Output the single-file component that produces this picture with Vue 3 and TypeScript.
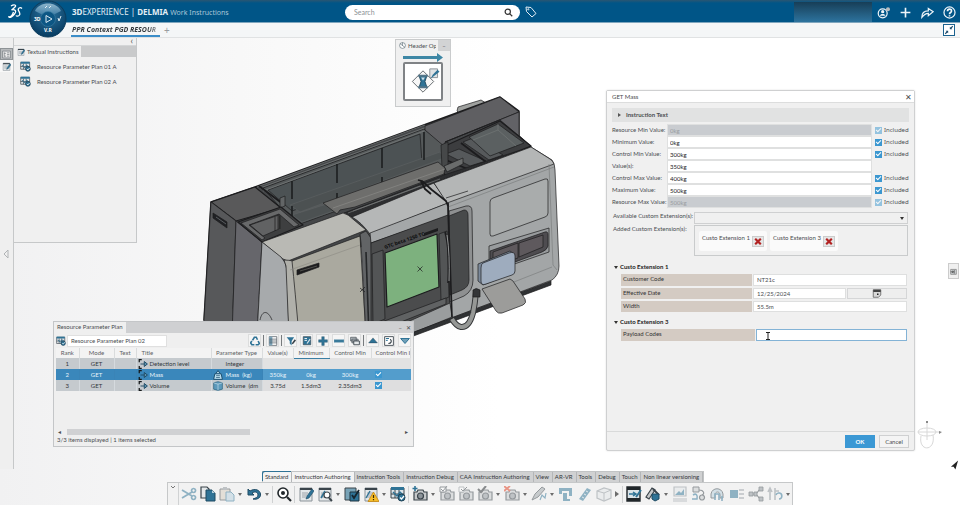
<script setup lang="ts">
import { ref } from 'vue'

interface Shape {
  d: string
  f?: string
  s?: string
  w?: number
}
interface Tool {
  name: string
  icon: Shape[]
  dim?: boolean
  menu?: boolean
  sep?: boolean
}

const B = '#2f7396'
const D = '#3a444b'
const G = '#8b9399'

const sheet: Shape[] = [
  { d: 'M2 2H14V15H2Z', f: '#e4e8ea', s: G },
  { d: 'M2 2H14V4H2Z', f: D },
  { d: 'M4 7H10M4 9H9M4 11H8', s: G, w: 0.8 },
]
const pencil: Shape[] = [{ d: 'M8 13L9 10L14 3L16 5L11 12Z', f: B, s: '#1f4a63', w: 0.6 }]
const camera: Shape[] = [
  { d: 'M2 6H5L6 4H11L12 6H15V14H2Z', f: '#c6c9cb', s: D, w: 1.2 },
  { d: 'M8.500 7A3 3 0 1 0 8.500 13A3 3 0 1 0 8.500 7Z', f: '#8b9399', s: D, w: 1.2 },
]
const planIcon: Shape[] = [
  { d: 'M1 2H14V12H1Z', f: '#dde5ea', s: D },
  { d: 'M1 1H14V4H1Z', f: B },
  { d: 'M5 4V12M9 4V12M1 8H14', s: D },
  { d: 'M3 6L7 10L10 6L13 9', s: B, w: 1.4 },
  { d: 'M11.500 8A3.500 3.500 0 1 0 11.500 15A3.500 3.500 0 1 0 11.500 8Z', f: B, s: '#1c3d50' },
  { d: 'M10 11.500L11.500 13L14 10', s: '#ffffff', w: 1.2 },
]
const undo: Shape[] = [
  { d: 'M2 3V9H8L6 7C9 5 12 6 12 9C12 11 10 12 7 13C12 14 15 11 14.500 8C14 4 9 2 4 5Z', f: B, s: '#1f4a63', w: 1 },
]

const tools: Tool[] = [
  { name: 'Cut', dim: true, icon: [
    { d: 'M1 4L11 10M1 12L11 6', s: B, w: 1.8 },
    { d: 'M12.500 2.500A2 2 0 1 0 12.600 2.500ZM12.500 9.500A2 2 0 1 0 12.600 9.500Z', s: B, w: 1.7 },
  ] },
  { name: 'Copy', icon: [
    { d: 'M1 1H7L9 3V12H1Z', f: '#e4e8ea', s: D, w: 1.2 },
    { d: 'M6 4H12L15 7V15H6Z', f: B, s: '#1f4a63', w: 1 },
    { d: 'M12 4V7H15', f: '#b6d0dd' },
  ] },
  { name: 'Paste', dim: true, menu: true, icon: [
    { d: 'M1 3H11V14H1Z', f: '#d5cdbd', s: D },
    { d: 'M4 1H8V4H4Z', f: G },
    { d: 'M7 6H12L15 9V15H7Z', f: '#b6d0dd', s: B },
  ] },
  { name: 'Undo', menu: true, icon: undo },
  { name: 'Search', sep: true, icon: [
    { d: 'M7 2A5 5 0 1 0 7 12A5 5 0 1 0 7 2Z', f: '#ffffff', s: '#20262a', w: 1.6 },
    { d: 'M7 5A2 2 0 1 0 7 9A2 2 0 1 0 7 5Z', f: '#20262a' },
    { d: 'M11 11L15 15', s: '#20262a', w: 2.2 },
  ] },
  { name: 'Edit instruction', sep: true, icon: [...sheet, ...pencil] },
  { name: 'Inspect instruction', menu: true, icon: [
    ...sheet,
    { d: 'M4 12L8 5', s: B, w: 1.6 },
    { d: 'M10 6A3 3 0 1 0 10 12A3 3 0 1 0 10 6Z', f: '#ffffff', s: D, w: 1.2 },
    { d: 'M12 12L15 15', s: D, w: 1.8 },
  ] },
  { name: 'Validate', icon: [
    { d: 'M1 2H12V14H1Z', f: '#78a3b7', s: D },
    { d: 'M6 6H15V15H6Z', f: B, s: '#1f3440' },
    { d: 'M8 9L10 12L15 4', s: '#17262f', w: 1.8 },
  ] },
  { name: 'Warnings', menu: true, icon: [
    ...sheet,
    { d: 'M3 12L7 5', s: B, w: 1.4 },
    { d: 'M10.500 6L16 15.500H5Z', f: '#f6bd29', s: '#c5860e', w: 0.8 },
    { d: 'M10.500 9V12M10.500 13V14.200', s: '#3a2a00', w: 1.2 },
  ] },
  { name: 'Parameter plan', icon: planIcon },
  { name: 'Capture', sep: true, menu: true, icon: [...camera, { d: 'M3 0V5M0.500 2.500H5.500', s: B, w: 1.6 }] },
  { name: 'Capture list', dim: true, icon: [...camera, { d: 'M1 1H7V6H1Z', f: '#ffffff', s: D }, { d: 'M2 3L4 5L8 0', s: D }] },
  { name: 'Capture check', dim: true, icon: [...camera, { d: 'M1 1H6V6H1Z', f: '#ffffff', s: G }, { d: 'M3 3L5 5L9 1', s: D }] },
  { name: 'Apply capture', dim: true, menu: true, icon: [...camera, { d: 'M1 3L4 6L9 0', s: '#20262a', w: 2 }] },
  { name: 'Delete capture', dim: true, menu: true, icon: [...camera, { d: 'M0 0L6 5M6 0L0 5', s: '#e03818', w: 1.8 }] },
  { name: 'Annotate', dim: true, menu: true, icon: [
    { d: 'M1 14L4 8L11 1L14 3L7 11Z', f: '#9ea5a9', s: D },
    { d: 'M9 14L11 9L14 12L15 7', s: B, w: 1.2 },
  ] },
  { name: 'Measure', dim: true, icon: [
    { d: 'M1 2H14V10H11V5H4V8H1Z', f: B },
    { d: 'M5 7H9V13H12V15H5Z', f: B },
  ] },
  { name: 'Ruler', dim: true, icon: [{ d: 'M2 13L10 2L14 4L6 15Z', f: B }, { d: 'M5 11L7 12M7 8L9 9M9 5L11 6', s: '#ffffff', w: 0.8 }] },
  { name: 'Box', dim: true, menu: true, icon: [
    { d: 'M1 5L8 2L15 4V12L8 15L1 12Z', f: '#e4e8ea', s: G, w: 1.2 },
    { d: 'M1 5L8 7L15 4M8 7V15', s: G },
  ] },
  { name: 'Filmstrip', sep: true, icon: [
    { d: 'M1 1H14V15H1Z', f: '#dbe4e9', s: '#20262a', w: 1.4 },
    { d: 'M1 1H14V4H1ZM1 12H14V15H1Z', f: '#20262a' },
    { d: 'M3 8H9M7 6L10 8L7 10', s: B, w: 1.5 },
    { d: 'M10 11L15 4', s: B, w: 2 },
  ] },
  { name: 'Assemble', menu: true, icon: [
    { d: 'M1 11L7 2L10 4L4 13Z', f: '#c6c9cb', s: D, w: 1.2 },
    { d: 'M8 3L14 9', s: D, w: 2 },
    { d: 'M7 8H14V13L10 15L7 13Z', f: B, s: '#1f4a63' },
  ] },
  { name: 'Picture list', dim: true, icon: [
    { d: 'M2 1H14V10H2Z', f: '#e4e8ea', s: G, w: 1.2 },
    { d: 'M3 9L7 5L9 7L12 3V9Z', f: B },
    { d: 'M1 13H15M1 15H15', s: G, w: 1.2 },
  ] },
  { name: 'Link objects', dim: true, icon: [
    { d: 'M2 1H8V6H2Z', f: '#c6c9cb', s: D },
    { d: 'M8 4C13 4 14 8 11 9', s: D, w: 1.2 },
    { d: 'M11 9A2.500 2.500 0 1 0 11 14A2.500 2.500 0 1 0 11 9Z', f: '#c6c9cb', s: D, w: 1.2 },
    { d: 'M2 9C5 7 7 9 6 13H1', s: B, w: 1.6 },
  ] },
  { name: 'Arc', dim: true, icon: [
    { d: 'M1 12V8C2 1 12 1 13 8V12H10V9C10 5 5 5 5 9V12Z', f: '#b6d0dd', s: D, w: 1 },
    { d: 'M5 14V8H9V14M12 10V15', s: B, w: 1.6 },
  ] },
  { name: 'Align', dim: true, icon: [
    { d: 'M1 4H9V12H1Z', f: B },
    { d: 'M10 4H15M10 8H15M10 12H15', s: G, w: 1.6 },
  ] },
  { name: 'Tree', dim: true, icon: [
    { d: 'M3 8H8M8 8L12 3M8 8L12 13', s: D, w: 1.2 },
    { d: 'M1 6H5V10H1ZM11 1H15V5H11ZM11 11H15V15H11ZM6 6H9V10H6Z', f: G, s: D, w: 0.8 },
  ] },
  { name: 'Flow', dim: true, menu: true, icon: [
    { d: 'M3 14V3M1 6L3 2L5 6M8 2V14M8 5H12', s: G, w: 1.6 },
    { d: 'M9 9A3 3 0 1 1 12 13', s: B, w: 1.6 },
  ] },
]

const gridTools: Tool[] = [
  { name: 'Refresh', icon: [
    { d: 'M4 7L7 2H10L12 6', s: B, w: 2.6 },
    { d: 'M13 8L15 12L13 14H9', s: B, w: 2.6 },
    { d: 'M7 14H3L1 11L3 8', s: B, w: 2.6 },
  ] },
  { name: 'List view', sep: true, icon: [
    { d: 'M2 1H14V15H2Z', f: '#ffffff', s: D },
    { d: 'M2 1H7V15H2Z', f: '#7da6bb' },
    { d: 'M2 5H14M2 8H14M2 11H14', s: D },
  ] },
  { name: 'Filter', sep: true, icon: [
    { d: 'M1 2H13L9 8V15L6 12V8Z', f: B },
    { d: 'M9 12L14 5L16 7L11 13Z', f: D },
  ] },
  { name: 'Edit list', icon: [
    { d: 'M2 1H14V14H2Z', f: B, s: D },
    { d: 'M4 4H8M4 7H8', s: '#ffffff', w: 1.4 },
    { d: 'M8 12L13 5', s: '#d7e3e9', w: 2 },
  ] },
  { name: 'Add', icon: [{ d: 'M6 1H10V6H15V10H10V15H6V10H1V6H6Z', f: B, s: '#1f4a63', w: 0.6 }] },
  { name: 'Remove', icon: [{ d: 'M0 6H16V10H0Z', f: B, s: '#78a3b7' }] },
  { name: 'Duplicate', icon: [
    { d: 'M1 2H10V8H1ZM3 5H13V11H3Z', f: '#b6bcc0', s: D },
    { d: 'M6 8H15V14H6Z', f: '#e4e8ea', s: D, w: 1.4 },
  ] },
  { name: 'Move up', sep: true, icon: [{ d: 'M8 3L15 11H1Z', f: B, s: '#1f3440', w: 0.6 }] },
  { name: 'Reorder', icon: [
    { d: 'M1 1H15V15H1Z', f: '#ffffff', s: D, w: 1.4 },
    { d: 'M3 4H8M3 7H6', s: B, w: 1.6 },
    { d: 'M7 12C12 12 13 8 10 5', s: D, w: 1.8 },
  ] },
  { name: 'Move down', icon: [{ d: 'M1 4H15L8 12Z', f: '#6f9fb7', s: B, w: 1.6 }] },
]

const ribbon = ['Standard', 'Instruction Authoring', 'Instruction Tools', 'Instruction Debug', 'CAA Instruction Authoring', 'View', 'AR-VR', 'Tools', 'Debug', 'Touch', 'Non linear versioning']

const plans = ['Resource Parameter Plan 01 A', 'Resource Parameter Plan 02 A']

const columns = ['Rank', 'Mode', 'Text', 'Title', 'Parameter Type', 'Value(s)', 'Minimum', 'Control Min', 'Control Min In']
const rows = [
  { rank: 1, mode: 'GET', title: 'Detection level', type: 'Integer', unit: '', value: '', min: '', control: '', inc: false },
  { rank: 2, mode: 'GET', title: 'Mass', type: 'Mass', unit: '(kg)', value: '350kg', min: '0kg', control: '300kg', inc: true },
  { rank: 3, mode: 'GET', title: 'Volume', type: 'Volume', unit: '(dm', value: '3.75d', min: '1.5dm3', control: '2.35dm3', inc: true },
]

const fields = ref([
  { id: 'rmin', label: 'Resource Min Value:', value: '0kg', locked: true, check: true, on: true },
  { id: 'min', label: 'Minimum Value:', value: '0kg', locked: false, check: true, on: true },
  { id: 'cmin', label: 'Control Min Value:', value: '300kg', locked: false, check: true, on: true },
  { id: 'val', label: 'Value(s):', value: '350kg', locked: false, check: false, on: false },
  { id: 'cmax', label: 'Control Max Value:', value: '400kg', locked: false, check: true, on: true },
  { id: 'max', label: 'Maximum Value:', value: '500kg', locked: false, check: true, on: true },
  { id: 'rmax', label: 'Resource Max Value:', value: '500kg', locked: true, check: true, on: true },
])
const extensions = ref(['Custo Extension 1', 'Custo Extension 3'])
const customer = ref('NT21c')
const effective = ref('12/25/2024')
const widthValue = ref('55.5m')
const payload = ref('')
const planName = ref('Resource Parameter Plan 02')
const query = ref('')
</script>

<template>
  <div class="app">
    <header class="topbar">
      <div class="brand">
        <svg class="ds" viewBox="0 0 15 16" aria-hidden="true">
          <path d="M3 2C6 0 9 1 7 3C6 4 5 5 3.500 6C7 5 9 7 6.500 10C4.500 12.500 2 14 1 13C2.500 13 4.500 11 5.500 8M14 4.500C12 2.500 9.500 4.500 10.500 6.500C11.500 8.500 12.500 9.500 11.500 11C10.500 12.500 8.500 12.500 8 11.500" />
        </svg>
        <span class="product"><b>3D</b>EXPERIENCE | <b>DELMIA</b> <span class="app-name">Work Instructions</span></span>
      </div>
      <label class="search">
        <input v-model="query" type="text" placeholder="Search" aria-label="Search" />
        <svg viewBox="0 0 12 12" aria-hidden="true"><circle cx="5" cy="5" r="3.500" /><path d="M7.500 7.500L11 11" /></svg>
      </label>
      <button class="plain tag" aria-label="Tags">
        <svg viewBox="0 0 12 12"><path d="M1 1L6 1.500L11 7.500L7 11L1.500 5.500Z" /><circle cx="3.300" cy="3.300" r="0.600" /></svg>
      </button>
      <div class="spacer"></div>
      <div class="account"></div>
      <div class="actions">
        <button class="plain" aria-label="Profile">
          <svg viewBox="0 0 16 16"><circle cx="7" cy="9" r="5.500" /><circle cx="7" cy="7" r="2" class="solid" /><path d="M3.500 12C4 9 10 9 10.500 12Z" class="solid" /><circle cx="13.500" cy="4" r="2.500" class="badge" /></svg>
        </button>
        <button class="plain" aria-label="Add"><svg viewBox="0 0 16 16"><path class="thick" d="M8 2V14M2 8H14" /></svg></button>
        <button class="plain" aria-label="Share"><svg viewBox="0 0 16 16"><path d="M9 3L15 7L9 12V9C6 9 4 10 1 14C1 9 4 6 9 6Z" /></svg></button>
        <button class="plain" aria-label="Help"><svg viewBox="0 0 16 16"><circle cx="8" cy="8" r="6.800" /><path class="thick" d="M5.500 6.500C5.500 3 10.500 3 10.500 6C10.500 8 8 8 8 10M8 11.500V13" /></svg></button>
      </div>
    </header>

    <nav class="tabbar">
      <a href="#" class="doc-tab">PPR Context PGD RESOUR</a>
      <button class="plain new-tab" aria-label="New tab">+</button>
      <button class="collapse" aria-label="Collapse">
        <svg viewBox="0 0 12 12"><path d="M7 5V2L8 3L10 1L11 2L9 4L10 5ZM5 7V10L4 9L2 11L1 10L3 8L2 7Z" /></svg>
      </button>
    </nav>

    <button class="compass" aria-label="Compass">
      <svg viewBox="0 0 38 38">
        <defs>
          <radialGradient id="ball" cx="0.500" cy="0.350" r="0.650"><stop offset="0" stop-color="#2d75a2" /><stop offset="1" stop-color="#073c61" /></radialGradient>
          <linearGradient id="cap" x2="0" y2="1"><stop offset="0" stop-color="#b3d3e4" /><stop offset="1" stop-color="#4a86ac" /></linearGradient>
        </defs>
        <circle cx="19" cy="19" r="18" fill="url(#ball)" stroke="#0c3d5d" />
        <path d="M6 11C10 1 28 1 32 11L24 15C22 11 16 11 14 15Z" fill="url(#cap)" opacity="0.750" />
        <circle cx="19" cy="19" r="7.500" fill="#0c5684" stroke="#3d7da3" stroke-width="0.600" />
        <path d="M17 15.500L23 19L17 22.500Z" fill="none" stroke="#dcebf3" stroke-width="1" />
        <path d="M16 8L18 6M20 8L22 6M29 18L30 21L32 16" stroke="#e2eef5" fill="none" />
        <text x="5" y="21">3D</text>
        <text x="15" y="32">V.R</text>
      </svg>
    </button>

    <main class="workspace">
      <aside class="rail">
        <button class="rail-btn active" aria-label="Structure">
          <svg viewBox="0 0 16 16"><path d="M1 2H15V14H1Z" fill="#e8e8e8" stroke="#60686d" /><path d="M4 4V12M4 6H7M4 11H7M9 5H13M9 8H13M9 11H13" stroke="#60686d" fill="none" /></svg>
        </button>
        <button class="rail-btn" aria-label="Instructions">
          <svg viewBox="0 0 16 16"><path v-for="(p, i) in [...sheet, ...pencil]" :key="i" :d="p.d" :fill="p.f ?? 'none'" :stroke="p.s" :stroke-width="p.w ?? 1" /></svg>
        </button>
        <button class="plain expander" aria-label="Expand">
          <svg viewBox="0 0 8 10"><path d="M6 1L2 5L6 9Z" /></svg>
        </button>
      </aside>

      <section class="side-panel">
        <div class="panel-top"><button class="plain" aria-label="Hide panel">‹</button></div>
        <div class="panel-tabs">
          <button class="panel-tab">
            <svg viewBox="0 0 16 16"><path v-for="(p, i) in [...sheet, ...pencil]" :key="i" :d="p.d" :fill="p.f ?? 'none'" :stroke="p.s" :stroke-width="p.w ?? 1" /></svg>
            Textual Instructions
          </button>
        </div>
        <ul>
          <li v-for="plan in plans" :key="plan">
            <svg viewBox="0 0 16 16"><path v-for="(p, i) in planIcon" :key="i" :d="p.d" :fill="p.f ?? 'none'" :stroke="p.s" :stroke-width="p.w ?? 1" /></svg>
            <a href="#">{{ plan }}</a>
          </li>
        </ul>
      </section>

      <svg class="machine" viewBox="200 90 370 250" aria-label="Machine model">
        <g stroke="#1c1c1e" stroke-width="0.700" stroke-linejoin="round">
          <path d="M457 111L458 107L481 100L486 103L481 107L460 114Z" fill="#9fa19f" />
          <path d="M211 202L255 187L500 97L519 111L519 136L531 147L500 200L350 250L204 320Z" fill="#454749" stroke-width="1.500" />
          <path d="M263 188L424 129L443 144L445 172L300 224L278 205Z" fill="#55595a" />
          <path d="M268 190L420 134L422 163L292 211Z" fill="#4c5254" />
          <path d="M290 205L440 152L444 158L300 212ZM292 215L330 203L336 210L302 222Z" fill="#4c5152" stroke="#5c6061" />
          <path d="M257 187L425 125M260 188L427 127M263 191L424 131" stroke="#757878" fill="none" stroke-width="0.800" />
          <path d="M292 181V199M292 206V216M337 164V183M337 193V200M382 148V168M382 177V184M424 132V160" stroke="#1c1e20" fill="none" stroke-width="1.600" />
          <path d="M254 188L278 206M259 186L283 204" fill="none" stroke-width="1.800" />
          <path d="M280 198L285 196V206L280 208Z" fill="#626566" />
          <path d="M425 126L500 97L519 112L445 142V147L425 130Z" fill="#5f5f62" />
          <path d="M445 142L519 112V136L500 120L445 142Z" fill="#626266" />
          <path d="M445 146L500 121L531 146L448 180L442 170Z" fill="#3c3d3f" stroke-width="1.200" />
          <path d="M446 154L459 149L486 161L470 166ZM463 142L473 138L503 155L489 160Z" fill="#56595b" />
          <path d="M469 137L498 124L524 143L490 156Z" fill="#5b6061" />
          <path d="M498 124V130L516 146M498 130L473 140" fill="none" stroke="#737777" />
          <path d="M446 160L470 170M461 143L486 162" fill="none" stroke-width="1.800" />
          <path d="M441 145L448 142V170L442 168Z" fill="#464849" />
          <path d="M444 166L463 158V164L447 172Z" fill="#6a6c6c" />
          <path d="M323 203L438 162L445 168L444 174L355 207L340 210L337 214Z" fill="#6e6e6c" />
          <path d="M333 208L445 169" stroke="#8a8a87" fill="none" />
          <path d="M344 213L444 175L530 147L437 185L352 217Z" fill="#2d2e30" />
          <path d="M348 213L420 186M353 211L440 179" stroke="#777a7a" fill="none" />

          <path d="M211 202L255 187L281 208L236 221Z" fill="#59595a" stroke-width="1.100" />
          <path d="M211 202L236 221L232 336H203Z" fill="#57585a" />
          <path d="M236 221L262 242L257 336H232Z" fill="#66666b" />
          <path d="M213 213L227 222V228L213 218Z" fill="#202124" />
          <path d="M216 217L226 224" stroke="#73777a" fill="none" />
          <path d="M238 222L281 207L303 225L262 242Z" fill="#3e3f40" stroke-width="1.200" />
          <path d="M241 223L280 209L299 225L294 227L279 214L249 225L265 238L262 240Z" fill="#68696a" />
          <path d="M250 225L279 215V229L263 236Z" fill="#616263" />
          <path d="M275 217V231M278 216V229M280 216V229" fill="none" />

          <path d="M262 242L343 213Q348 214 354 220L366 230L288 261Q284 260 280 257Z" fill="#b9b9b4" />
          <path d="M262 242L281 257Q286 262 287 270L289 336H257Z" fill="#a7aaac" />
          <path d="M284 260Q289 260 293 261L300 336H289L286 266Z" fill="#b0b0aa" />
          <path d="M292 261L360 236L366 336H299Q295 290 292 261Z" fill="#aaa99f" />
          <path d="M290 270L360 245" stroke="#8f8e86" fill="none" />
          <path d="M297 270L319 263V267L297 275Z" fill="#1d1d1f" />
          <path d="M300 271L317 266" stroke="#66665f" fill="none" />
          <path d="M260 320C262 310 268 310 272 320" fill="none" />
          <path d="M360 234L366 231L371 238L373 336H366L361 243Z" fill="#626466" />
          <path d="M366 252L369 336" stroke="#252729" fill="none" stroke-width="1.600" />

          <path d="M352 217L434 183L448 203L370 234Q361 222 352 217Z" fill="#b5b7b7" />
          <path d="M370 233L448 203V216L371 243Z" fill="#a4a7a8" />
          <path d="M434 183L531 147L552 160Q555 164 555 170L559 266Q559 275 552 280L414 332V330L450 316L448 203Z" fill="#a3a6a7" />
          <path d="M434 183L531 147L550 159Q553 161 554 164L447 203Z" fill="#b4b6b6" />
          <path d="M448 207L554 167M549 164L553 265L557 270M486 293L552 267" stroke="#7c7f80" fill="none" />
          <path d="M371 243L448 215L450 314L371 345Z" fill="#4b4c4d" />
          <path d="M372 254L383 250L385 319L373 324ZM439 234L447 231L449 297L441 300Z" fill="#535556" />
          <path d="M371 326L446 298V304L371 334Z" fill="#606263" />
          <path d="M376 336L450 303L452 317L405 336Z" fill="#9a9d9e" />
          <path d="M385 253L437 234L439 287L387 307Z" fill="#7db17e" stroke-width="1.200" />
          <path d="M449 211L466 206Q472 205 472 211L473 280Q473 291 464 296L450 302Z" fill="#8e9091" />
          <path d="M449 216L464 210Q468 210 468 215L469 280Q469 287 462 290L450 295Z" fill="#484a4b" />
          <path d="M448 203L452 317M445 232Q450 250 448 283" fill="none" stroke-width="1.600" />
          <path d="M447 235Q450 255 449 281" stroke="#c2c4c4" fill="none" />
          <path d="M418 180L422 181L432 190L446 201L448 206M421 181L425 189L431 194" fill="none" stroke-width="1.800" />
          <path d="M446 198L468 191" fill="none" />

          <path d="M490 202Q490 199 493 198L545 179Q548 178 548 181V213Q548 216 545 217L493 236Q490 237 490 234Z" fill="#a9acac" />
          <path d="M489 246L549 228V252L500 269L489 264Z" fill="#989b9d" />
          <path d="M490 251L545 232Q548 231 548 235V246Q547 250 542 252L515 262L490 268Z" fill="#4e4c50" />
          <path d="M493 252L518 243V258L493 266ZM519 243L543 235V247L519 257Z" fill="#5e595d" />
          <path d="M414 332L551 281V285L408 338Z" fill="#303234" />
          <path d="M482 289L510 279Q513 280 515 284L525 299Q527 303 523 305L502 313Q498 314 496 311Z" fill="#9c9c9a" />
          <path d="M478 264L510 251L514 254V273L483 285L478 281Z" fill="#7b899a" />
          <path d="M483 263L509 253Q515 251 515 256V271Q515 274 512 275L486 284Q481 286 481 281V268Q481 264 483 263Z" fill="#9eacbe" />
          <path d="M476 292Q475 304 473 313Q469 328 461 327Q456 326 452 319" fill="none" stroke="#36383a" stroke-width="6" />
          <path d="M476 292Q475 304 473 313Q469 328 461 327Q456 326 452 319" fill="none" stroke="#969896" stroke-width="4" />
          <path d="M473 290Q476 287 480 290V297H473Z" fill="#333537" />
          <path d="M417.500 266.500L422.500 271.500M422.500 266.500L417.500 271.500M360 288L365 292M365 287L360 292" fill="none" />
        </g>
        <text x="385" y="249" transform="rotate(-19 385 249)">GTC beta 1250 TC</text>
        <path d="M424 233L438 228V231L424 236Z" fill="#1c1c1e" />
      </svg>

      <section class="operation">
        <header>
          <svg viewBox="0 0 12 12"><circle cx="6" cy="6" r="5" /><path d="M2 3L10 9M6 1V6" /></svg>
          <span>Header Op</span>
          <button aria-label="Minimise">–</button>
        </header>
        <svg class="arrow" viewBox="0 0 40 9"><path d="M0 3H34V0L40 4.500L34 9V6H0Z" /></svg>
        <button class="op-tile" aria-label="Header operation">
          <svg viewBox="0 0 34 34">
            <path d="M17 6L28 17L17 28L6 17Z" fill="#f7f7f7" stroke="#63696d" />
            <path d="M13 11H21L19 17L21 23H13L15 17Z" fill="#2f7396" stroke="#244c61" />
            <path d="M15 13H19L17 16Z" fill="#cfe0e9" />
            <path d="M12 11H22M12 23H22" stroke="#537689" stroke-width="2" />
            <path d="M24 4H32V13H24Z" fill="#dfe3e5" stroke="#8b9399" />
            <path d="M25 14L27 10L32 5L34 7Z" fill="#2f7396" />
          </svg>
        </button>
      </section>

      <section class="plan-window">
        <header class="plan-title">
          <h2>Resource Parameter Plan</h2>
          <div class="window-buttons"><button class="plain" aria-label="Minimise">–</button><button class="plain" aria-label="Close">✕</button></div>
        </header>
        <div class="plan-tools">
          <svg class="plan-icon" viewBox="0 0 16 16"><path v-for="(p, i) in planIcon" :key="i" :d="p.d" :fill="p.f ?? 'none'" :stroke="p.s" :stroke-width="p.w ?? 1" /></svg>
          <input v-model="planName" type="text" aria-label="Plan name" />
          <div class="grid-tools">
            <button v-for="t in gridTools" :key="t.name" class="grid-btn" :class="{ sep: t.sep }" :aria-label="t.name">
              <svg viewBox="0 0 16 16"><path v-for="(p, i) in t.icon" :key="i" :d="p.d" :fill="p.f ?? 'none'" :stroke="p.s" :stroke-width="p.w ?? 1" /></svg>
            </button>
          </div>
        </div>
        <table>
          <colgroup><col class="c-rank" /><col class="c-mode" /><col class="c-text" /><col class="c-title" /><col class="c-type" /><col class="c-val" /><col class="c-min" /><col class="c-ctl" /><col /></colgroup>
          <thead>
            <tr><th v-for="c in columns" :key="c" :class="{ left: c === 'Title', last: c === 'Control Min In', sorted: c === 'Minimum' }">{{ c }}</th></tr>
          </thead>
          <tbody>
            <tr v-for="r in rows" :key="r.rank" :class="{ selected: r.rank === 2, first: r.rank === 1 }">
              <td class="fixed">{{ r.rank }}</td>
              <td class="fixed">{{ r.mode }}</td>
              <td class="fixed"></td>
              <td class="fixed name">
                <div class="cell">
                  <svg viewBox="0 0 16 16"><path d="M6 1H2V5M2 11V15H6" stroke="#15181a" stroke-width="2" fill="none" /><path d="M4 8H10M10 4L15 8L10 12Z" stroke="#1f4a63" fill="#5b95b3" stroke-width="1.500" /></svg>
                  {{ r.title }}
                </div>
              </td>
              <td class="fixed name">
                <div class="cell type">
                  <svg v-if="r.rank === 1" viewBox="0 0 16 16"></svg>
                  <svg v-else-if="r.rank === 2" viewBox="0 0 16 16"><path d="M5 5L8 1L11 5M3 6H13L15 15H1Z" fill="#b7dced" stroke="#124463" stroke-width="1.400" /><path d="M5 9H11M5 12H11" stroke="#124463" /></svg>
                  <svg v-else viewBox="0 0 16 16"><path d="M1 3L8 1L15 3V13L8 15L1 13Z" fill="#5d9abb" stroke="#1f5878" /><path d="M1 3L8 5L15 3M8 5V15" stroke="#cbe2ee" fill="none" /></svg>
                  <span>{{ r.type }}</span><span>{{ r.unit }}</span>
                </div>
              </td>
              <td>{{ r.value }}</td>
              <td>{{ r.min }}</td>
              <td>{{ r.control }}</td>
              <td class="inc"><input v-if="r.inc" type="checkbox" class="check" checked :aria-label="r.title + ' included'" /></td>
            </tr>
          </tbody>
        </table>
        <div class="scroll"><span>◂</span><div class="track"><div class="thumb"></div></div><span>▸</span></div>
        <footer>3/3 items displayed | 1 items selected</footer>
      </section>

      <section class="dialog" role="dialog" aria-label="GET Mass">
        <header><h2>GET Mass</h2><button class="plain" aria-label="Close">✕</button></header>
        <div class="dialog-body">
          <button class="accordion"><i class="tri right"></i>Instruction Text</button>
          <div class="fields">
            <div v-for="f in fields" :key="f.id" class="field">
              <label :for="f.id">{{ f.label }}</label>
              <input :id="f.id" v-model="f.value" type="text" :disabled="f.locked" />
              <label v-if="f.check" class="included" :class="{ locked: f.locked }"><input v-model="f.on" type="checkbox" class="check" :disabled="f.locked" />Included</label>
            </div>
          </div>
          <div class="ext-row">
            <label for="available">Available Custom Extension(s):</label>
            <div class="select-wrap"><select id="available"><option></option></select><i class="tri"></i></div>
          </div>
          <div class="ext-row">
            <span>Added Custom Extension(s):</span>
            <div class="chips">
              <div v-for="e in extensions" :key="e" class="chip">
                {{ e }}
                <button :aria-label="'Remove ' + e"><svg viewBox="0 0 10 10"><path d="M1 1L9 9M9 1L1 9" /></svg></button>
              </div>
            </div>
          </div>
          <fieldset>
            <legend><i class="tri"></i>Custo Extension 1</legend>
            <div class="prop"><label for="customer">Customer Code</label><input id="customer" v-model="customer" type="text" /></div>
            <div class="prop">
              <label for="effective">Effective Date</label>
              <div class="date">
                <input id="effective" v-model="effective" type="text" />
                <button aria-label="Choose date"><svg viewBox="0 0 12 12"><path d="M1 1H11V8L8 11H1Z" fill="#d8d8d8" stroke="#555" /><path d="M1 1H11V4H1Z" fill="#444" /><path d="M6 7H8" stroke="#222" stroke-width="2" /></svg></button>
              </div>
            </div>
            <div class="prop"><label for="width">Width</label><input id="width" v-model="widthValue" type="text" /></div>
          </fieldset>
          <fieldset>
            <legend><i class="tri"></i>Custo Extension 3</legend>
            <div class="prop editing"><label for="payload">Payload Codes</label><input id="payload" v-model="payload" type="text" /></div>
          </fieldset>
        </div>
        <footer><button class="ok">OK</button><button class="cancel">Cancel</button></footer>
      </section>

      <svg class="beam" viewBox="0 0 6 8"><path d="M1 0.500H5M3 0.500V7.500M1 7.500H5" /></svg>
      <button class="dock" aria-label="Dock"><svg viewBox="0 0 10 10"><path d="M1 2H9V9H1Z" fill="#d4d8da" stroke="#777" /><path d="M1 5.500H5M3 4L5 5.500L3 7M6 3V8" stroke="#333" fill="none" /></svg></button>
      <svg class="axes" viewBox="0 0 28 30"><g fill="none" stroke="#d8d8d8"><ellipse cx="11" cy="12" rx="9" ry="4" /><path d="M11 2V20M2 12H24M5 16C2 32 20 32 17 15" /></g><path d="M10 1H12V3H10ZM23 11L26 12L23 14Z" fill="#888" /></svg>
      <svg class="pointer" viewBox="0 0 10 12"><path d="M9 1L6 11L4 8L1 8Z" /></svg>
    </main>

    <footer class="dockbar">
      <div class="ribbon">
        <button v-for="(t, i) in ribbon" :key="t" :class="{ active: i < 2, flag: i === 0 }">{{ t }}</button>
      </div>
      <div class="toolbar">
        <button class="plain handle" aria-label="Customise"><svg viewBox="0 0 6 4"><path d="M1 1L3 3L5 1" /></svg></button>
        <template v-for="t in tools" :key="t.name">
          <div v-if="t.sep" class="bar"></div>
          <button class="plain tool" :class="{ dim: t.dim }" :aria-label="t.name">
            <svg viewBox="0 0 16 16"><path v-for="(p, i) in t.icon" :key="i" :d="p.d" :fill="p.f ?? 'none'" :stroke="p.s" :stroke-width="p.w ?? 1" /></svg>
          </button>
          <button v-if="t.menu" class="plain more" :class="{ side: t.name === 'Box' }" :aria-label="t.name + ' options'"><i class="tri"></i></button>
        </template>
      </div>
    </footer>
  </div>
</template>

<style>
body {
  margin: 0;
}
</style>

<style scoped>
* {
  box-sizing: border-box;
}
.app {
  position: relative;
  display: flex;
  flex-direction: column;
  min-height: 100vh;
  overflow: hidden;
  background: linear-gradient(90deg, #f1f1f2 0, #f8f8f8 25%, #ffffff 52%);
  color: #4a4d50;
  font-family: Lato, "Noto Sans", sans-serif;
  font-size: 6px;
  line-height: 8px;
}
svg {
  display: block;
}
button,
input,
select {
  margin: 0;
  padding: 0;
  font: inherit;
  color: inherit;
}
h2 {
  margin: 0;
  font: inherit;
}
a {
  color: inherit;
  text-decoration: none;
}
.plain {
  border: 0;
  background: none;
}
.tri {
  display: inline-block;
  border: 2px solid transparent;
  border-top: 3px solid #333;
  border-bottom: 0;
}
.tri.right {
  border: 2px solid transparent;
  border-left: 3px solid #555;
  border-right: 0;
}

.topbar {
  display: flex;
  align-items: center;
  height: 23px;
  padding: 2px 4px 0 8px;
  border-bottom: 1px solid #7fa6be;
  background: linear-gradient(#2a5672 0, #005587 3px);
  color: #e3eef5;
}
.brand {
  display: flex;
  flex: 0 1 337px;
  align-items: center;
  gap: 49px;
  min-width: 0;
}
.ds {
  width: 15px;
  height: 16px;
  fill: none;
  stroke: #fff;
  stroke-width: 1.3;
}
.product {
  font: 8px/12px "Noto Sans", sans-serif;
  white-space: nowrap;
}
.app-name {
  font-size: 7px;
  color: #a9c6d8;
}
.search {
  display: flex;
  flex: 0 1 175px;
  align-items: center;
  height: 15px;
  padding: 0 7px 0 9px;
  border-radius: 8px;
  background: #fff;
}
.search input {
  flex: 1;
  min-width: 0;
  border: 0;
  outline: 0;
  font-size: 7px;
}
.search input::placeholder {
  color: #8c9195;
}
.search svg {
  width: 9px;
  height: 9px;
  fill: none;
  stroke: #333;
  stroke-width: 1.6;
}
.tag {
  margin-left: 5px;
}
.tag svg {
  width: 12px;
  height: 12px;
  fill: none;
  stroke: #e3eef5;
}
.spacer {
  flex: 1;
}
.account {
  width: 78px;
  height: 20px;
  background: linear-gradient(#173e57, rgba(90, 145, 180, 0.5)), #005587;
}
.actions {
  display: flex;
  gap: 9px;
  padding-left: 5px;
}
.actions svg {
  width: 13px;
  height: 13px;
  fill: none;
  stroke: #eef5f9;
  stroke-width: 1.5;
}
.actions .thick {
  stroke-width: 2;
}
.actions .solid {
  fill: #eef5f9;
  stroke: none;
}
.actions .badge {
  fill: #b9bec1;
  stroke: none;
}

.tabbar {
  display: flex;
  align-items: stretch;
  height: 15px;
  padding: 0 5px 0 71px;
  border-bottom: 1px solid #e0e2e3;
  background: #f4f6f7;
}
.doc-tab {
  width: 89px;
  overflow: hidden;
  border-bottom: 2px solid #3b8dc8;
  background: linear-gradient(90deg, #30363a 86%, #c8ccd0);
  background-clip: text;
  color: transparent;
  font: italic bold 7px/13px "Open Sans", sans-serif;
  white-space: nowrap;
  padding-left: 1px;
}
.new-tab {
  margin: 0 auto 0 4px;
  color: #9a9da0;
  font: 10px/12px "Noto Sans", sans-serif;
}
.collapse {
  width: 12px;
  height: 12px;
  margin-top: 1px;
  padding: 0;
  border: 1px solid #1a628f;
  background: #fff;
}
.collapse path {
  fill: #17486b;
}
.compass {
  position: absolute;
  z-index: 2;
  top: 0;
  left: 29px;
  width: 38px;
  height: 38px;
  padding: 0;
  border: 0;
  background: none;
}
.compass text {
  fill: #fff;
  font: bold 5px "Noto Sans", sans-serif;
}

.workspace {
  position: relative;
  display: flex;
  flex: 1;
  align-items: flex-start;
}
.rail {
  display: flex;
  flex-direction: column;
  align-self: stretch;
  width: 14px;
  padding-top: 10px;
  border-right: 1px solid #c6c8c9;
  background: #efefef;
}
.rail-btn {
  height: 12px;
  padding: 1px 2px;
  border: 0;
  background: #f8f8f8;
}
.rail-btn svg {
  width: 9px;
  height: 9px;
}
.rail-btn.active {
  border: 1px solid #8e9396;
  background: #b7babc;
  padding: 0 1px;
}
.expander {
  margin: 177px auto 0 2px;
}
.expander svg {
  width: 8px;
  height: 10px;
  fill: none;
  stroke: #b0b3b5;
}
.side-panel {
  width: 123px;
  min-height: 205px;
  border: 1px solid #c6c8c9;
  border-width: 0 1px 1px 0;
  background: #f0f0f0;
}
.panel-top {
  height: 8px;
  padding-right: 3px;
  border-bottom: 1px solid #d4d6d7;
  text-align: right;
  line-height: 6px;
}
.panel-top button {
  font-size: 9px;
  line-height: 6px;
}
.panel-tabs {
  height: 11px;
  background: #c9cacb;
}
.panel-tab {
  display: flex;
  gap: 2px;
  align-items: center;
  height: 11px;
  padding: 0 2px 0 3px;
  border: 0;
  background: #f0f0f0;
}
.panel-tab svg {
  width: 8px;
  height: 8px;
}
.side-panel ul {
  margin: 0;
  padding: 2px 0 0 6px;
  list-style: none;
}
.side-panel li {
  display: flex;
  gap: 6px;
  align-items: center;
  height: 15px;
}
.side-panel li svg {
  width: 11px;
  height: 11px;
}

.machine {
  position: absolute;
  top: 52px;
  left: 200px;
  width: 370px;
  height: 250px;
}
.machine text {
  fill: #0d0e0f;
  font: bold 5px "Noto Sans", sans-serif;
}

.operation {
  position: absolute;
  top: 1px;
  left: 395px;
  width: 56px;
  padding: 0 7px 5px;
  border: 1px solid #c9cbcc;
  background: #f0f0f0;
}
.operation header {
  display: flex;
  gap: 2px;
  align-items: center;
  height: 11px;
  margin: 0 -7px 2px -4px;
}
.operation header svg {
  width: 7px;
  height: 7px;
  fill: #fff;
  stroke: #4c5e69;
}
.operation header span {
  flex: 1;
  overflow: hidden;
  white-space: nowrap;
}
.operation header button {
  width: 12px;
  height: 11px;
  border: 0;
  background: #d2d3d4;
}
.operation .arrow {
  width: 100%;
  height: 9px;
  fill: #3e87a5;
}
.op-tile {
  width: 40px;
  height: 39px;
  padding: 1px;
  border: 2px solid #808386;
  border-radius: 2px;
  background: #fff;
}
.op-tile svg {
  width: 34px;
  height: 33px;
}

.plan-window {
  position: absolute;
  top: 283px;
  left: 53px;
  width: 361px;
  padding: 0 2px 2px;
  border: 1px solid #c4c6c8;
  background: #efefef;
}
.plan-title {
  display: flex;
  justify-content: space-between;
  height: 11px;
  margin: 0 -2px;
  background: #cfd0d2;
}
.plan-title h2 {
  padding: 1px 3px;
  background: #efefef;
}
.window-buttons {
  display: flex;
  gap: 4px;
  padding-right: 2px;
}
.plan-tools {
  display: flex;
  align-items: center;
  height: 15px;
}
.plan-icon {
  width: 10px;
  height: 10px;
}
.plan-tools > input {
  width: 100px;
  height: 12px;
  margin-left: 1px;
  padding: 0 3px;
  border: 1px solid #e0e0e0;
  background: #fff;
}
.grid-tools {
  display: flex;
  gap: 3px;
  margin-left: auto;
}
.grid-btn {
  width: 13px;
  height: 13px;
  padding: 0;
  border: 1px solid #dcdddd;
  background: #f5f5f5;
}
.grid-btn svg {
  width: 10px;
  height: 10px;
  margin: 0 auto;
}
.grid-btn.sep {
  box-shadow: -3px 0 0 -1px #efefef, -4px 0 0 -1px #777b7e;
  margin-left: 2px;
}
table {
  width: 100%;
  border-collapse: collapse;
  table-layout: fixed;
}
.c-rank { width: 23px; }
.c-mode { width: 35px; }
.c-text { width: 22px; }
.c-title { width: 75px; }
.c-type { width: 51px; }
.c-val { width: 31px; }
.c-min { width: 36px; }
.c-ctl { width: 42px; }
th,
td {
  height: 11px;
  padding: 0;
  overflow: hidden;
  line-height: 8px;
  text-align: center;
  white-space: nowrap;
}
th {
  height: 10px;
  border-right: 1px solid #dadcdd;
  background: #f3f3f3;
  color: #5c6063;
  font-weight: normal;
}
th.left {
  padding-left: 5px;
  text-align: left;
}
th.last {
  padding-left: 4px;
  text-align: left;
}
th.sorted {
  border-bottom: 1px solid #3a7ea3;
}
td {
  background: #dededf;
  color: #33373a;
}
tr.first td {
  background: #e2e2e2;
}
tr td.fixed,
tr.first td.fixed {
  border-right: 1px solid #d5dade;
  background: #c5cace;
}
tr.selected td {
  background: #539dcc;
  color: #e8f3fa;
}
tr.selected td.fixed {
  border-color: #3a84b7;
  background: #3a87bb;
}
.cell {
  display: flex;
  gap: 2px;
  align-items: center;
  padding-left: 1px;
}
.cell svg {
  width: 10px;
  height: 10px;
}
.cell.type {
  gap: 3px;
}
td.inc {
  padding-left: 4px;
}
.check {
  display: flex;
  justify-content: center;
  width: 7px;
  height: 7px;
  appearance: none;
  background: #3b97d0;
}
.check::before {
  width: 2px;
  height: 4px;
  box-sizing: content-box;
  border: solid #fff;
  border-width: 0 1px 1px 0;
  content: "";
  transform: rotate(45deg);
}
.scroll {
  display: flex;
  gap: 6px;
  align-items: center;
  justify-content: space-between;
  height: 8px;
  margin: 37px 3px 0 2px;
}
.track {
  flex: 1;
}
.thumb {
  width: 55%;
  height: 6px;
  background: #d0d1d3;
}
.plan-window footer {
  padding: 0 1px;
}

.dialog {
  position: absolute;
  top: 52px;
  right: 45px;
  width: 309px;
  height: 361px;
  display: flex;
  flex-direction: column;
  border: 1px solid #cfd0d1;
  border-radius: 2px;
  background: #f0f0f0;
  box-shadow: 0 0 2px #ddd;
}
.dialog header {
  display: flex;
  justify-content: space-between;
  align-items: center;
  height: 12px;
  padding: 0 2px 0 5px;
  border-bottom: 1px solid #dcdddd;
  background: #fff;
}
.dialog header button {
  font-size: 8px;
}
.dialog-body {
  flex: 1;
  padding: 5px 5px 0;
}
.accordion {
  display: flex;
  gap: 5px;
  align-items: center;
  width: 100%;
  height: 14px;
  margin-bottom: 2px;
  padding-left: 6px;
  border: 0;
  background: #e1e2e2;
  font-weight: bold;
}
.field {
  display: flex;
  align-items: center;
  height: 12px;
}
.field > label:first-child {
  width: 55px;
}
.field > input {
  flex: 1;
  min-width: 0;
  height: 12px;
  margin-right: 3px;
  padding: 0 2px;
  border: 1px solid #dfe0e0;
  background: #fff;
  color: #222;
}
.field > input:disabled {
  background: #c9ccd0;
  color: #999da1;
}
.included {
  display: flex;
  gap: 2px;
  align-items: center;
  width: 34px;
  font-family: "Noto Sans", sans-serif;
}
.field > input:last-child {
  margin-right: 37px;
}
.included.locked .check {
  opacity: 0.5;
}
.ext-row {
  display: flex;
  align-items: flex-start;
  margin-top: 1px;
  padding: 0 1px;
}
.ext-row > :first-child {
  width: 81px;
}
.fields + .ext-row {
  margin-top: 4px;
}
.select-wrap {
  display: flex;
  flex: 1;
  align-items: center;
  height: 12px;
  padding-right: 3px;
  border: 1px solid #cfd0d1;
}
.select-wrap select {
  flex: 1;
  appearance: none;
  border: 0;
  background: none;
}
.chips {
  display: flex;
  flex: 1;
  gap: 3px;
  align-items: center;
  height: 31px;
  padding-left: 4px;
  border: 1px solid #c9cbcc;
}
.chip {
  display: flex;
  gap: 2px;
  width: 68px;
  height: 20px;
  padding: 3px 3px 0;
  border-radius: 2px;
  background: #fafafa;
  white-space: nowrap;
}
.chip button {
  width: 12px;
  height: 11px;
  margin: 2px 0 0 auto;
  padding: 1px;
  border: 1px solid #ccc;
  background: #e5e5e5;
}
.chip svg {
  width: 8px;
  height: 7px;
  stroke: #b22222;
  stroke-width: 3;
}
fieldset {
  display: flex;
  flex-direction: column;
  gap: 2px;
  min-width: 0;
  margin: 7px 0 0;
  padding: 0 2px 0 9px;
  border: 0;
}
fieldset + fieldset {
  margin-top: 6px;
}
legend {
  margin-left: -7px;
  padding: 0 0 3px;
  font-weight: bold;
  color: #222;
}
legend .tri {
  margin-right: 2px;
}
.prop {
  display: flex;
  gap: 1px;
  height: 12px;
}
.prop + .prop {
  height: 11px;
}
.prop label {
  width: 131px;
  padding: 1px 2px;
  background: #d4cbc3;
  color: #333;
}
.prop input {
  flex: 1;
  min-width: 0;
  padding: 0 3px;
  border: 1px solid #dedfdf;
  background: #fff;
}
.date {
  display: flex;
  flex: 1;
  gap: 1px;
}
.date button {
  width: 60px;
  border: 1px solid #d5d6d7;
  background: #eee;
}
.date svg {
  width: 10px;
  height: 9px;
  margin: 0 auto;
}
.prop.editing label {
  width: 134px;
}
.prop.editing input {
  border-color: #83b3d6;
}
.dialog footer {
  display: flex;
  gap: 4px;
  justify-content: flex-end;
  padding: 3px 5px 2px;
  border-top: 1px solid #d9dada;
}
.dialog footer button {
  width: 30px;
  height: 13px;
  border: 1px solid #cfd0d1;
  background: #f4f4f4;
}
.dialog footer .ok {
  border-color: #3b98d4;
  background: #3b98d4;
  color: #fff;
  font-weight: bold;
}

.beam {
  position: absolute;
  top: 294px;
  right: 189px;
  width: 6px;
  height: 8px;
  fill: none;
  stroke: #222;
}
.dock {
  position: absolute;
  top: 225px;
  right: 1px;
  width: 11px;
  height: 16px;
  padding: 0 1px;
  border: 1px solid #ccc;
  background: #f0f0f0;
}
.axes {
  position: absolute;
  top: 382px;
  right: 16px;
  width: 28px;
  height: 30px;
}
.pointer {
  position: absolute;
  top: 421px;
  right: 1px;
  width: 9px;
  height: 12px;
  fill: #222;
}

.dockbar {
  display: flex;
  flex-direction: column;
  width: fit-content;
  margin: 0 auto;
  padding-top: 2px;
}
.ribbon {
  display: flex;
  align-self: flex-start;
  margin-left: 95px;
  border: 1px solid #c2c4c5;
  border-bottom: 0;
}
.ribbon button {
  position: relative;
  height: 10px;
  padding: 0 3px 0 2px;
  border: 0;
  border-right: 1px solid #b4b6b8;
  background: #d0d1d2;
  color: #33373a;
  white-space: nowrap;
}
.ribbon button.active {
  background: #f3f3f3;
}
.ribbon .flag {
  border-top-left-radius: 2px;
  box-shadow: -1px -1px 0 #2f7396;
}
.toolbar {
  display: flex;
  align-items: center;
  height: 23px;
  border: 1px solid #c6c8c9;
  border-bottom: 0;
  background: #f2f2f2;
}
.handle {
  align-self: stretch;
  width: 11px;
  border-right: 1px solid #d0d2d3;
}
.handle svg {
  width: 6px;
  height: 4px;
  margin: -9px auto 0;
  fill: none;
  stroke: #777;
}
.tool {
  width: 19px;
  height: 19px;
}
.tool svg {
  width: 16px;
  height: 16px;
  margin: 0 auto;
}
.dim svg {
  opacity: 0.5;
}
.more {
  width: 8px;
}
.more .tri {
  display: block;
  margin: 0 auto;
  width: 0;
  opacity: 0.7;
}
.more.side .tri {
  border: 3px solid transparent;
  border-left: 4px solid #333;
  border-right: 0;
}
.bar {
  width: 1px;
  height: 17px;
  margin: 0 1px;
  background: #cfd1d2;
}
</style>
